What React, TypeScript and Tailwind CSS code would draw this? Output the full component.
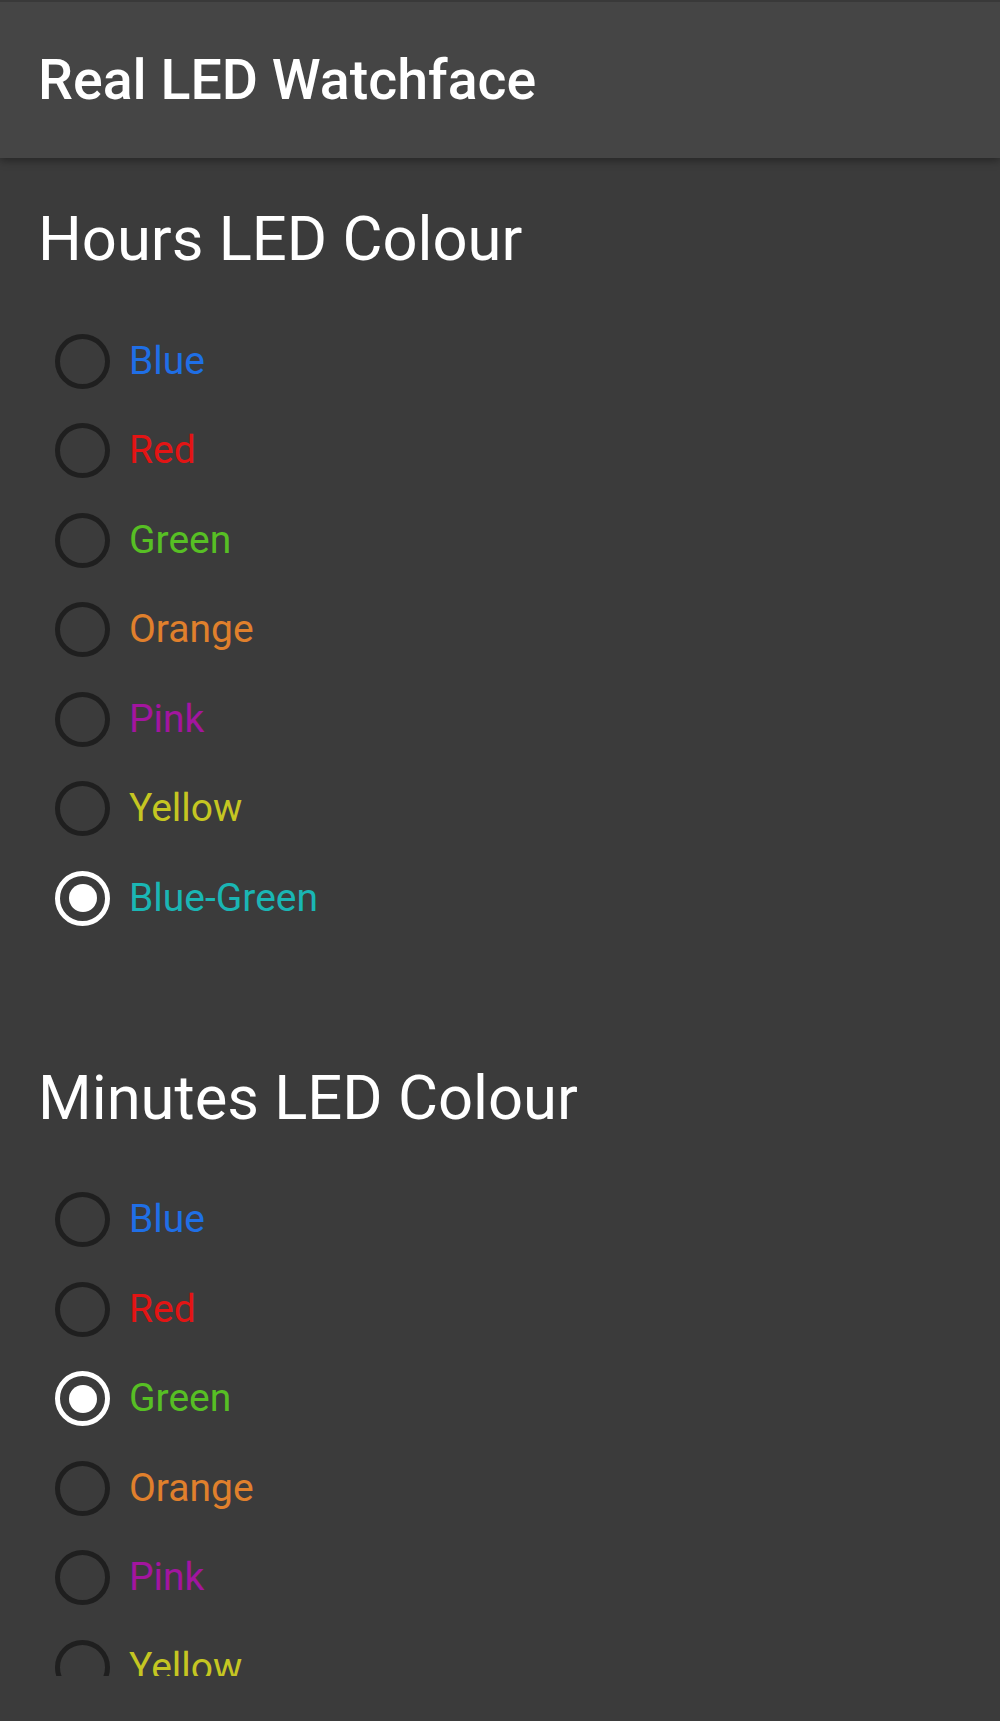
import React from "react";

type Opt = { label: string; color: string };

const OPTIONS: Opt[] = [
  { label: "Blue", color: "#1f6fe6" },
  { label: "Red", color: "#e31414" },
  { label: "Green", color: "#57bf24" },
  { label: "Orange", color: "#e0802c" },
  { label: "Pink", color: "#a3159f" },
  { label: "Yellow", color: "#c5c622" },
  { label: "Blue-Green", color: "#1ab6b4" },
];

function Radio({ checked }: { checked: boolean }) {
  if (checked) {
    return (
      <div className="w-[55px] h-[55px] rounded-full border-[5.5px] border-white flex items-center justify-center shrink-0">
        <div className="w-[28px] h-[28px] rounded-full bg-white" />
      </div>
    );
  }
  return <div className="w-[55px] h-[55px] rounded-full border-[5.5px] border-[#1f1f1f] shrink-0" />;
}

function Section({ title, selected }: { title: string; selected: string }) {
  return (
    <div className="flex flex-col">
      <h2 className="px-[38px] text-[61.5px] leading-[60px] font-normal text-white">{title}</h2>
      <div className="mt-[47.5px] flex flex-col">
        {OPTIONS.map((o) => (
          <div key={o.label} className="h-[89.5px] flex items-center pl-[55px]">
            <Radio checked={o.label === selected} />
            <span className="ml-[19px] text-[39px] leading-[39px]" style={{ color: o.color }}>
              {o.label}
            </span>
          </div>
        ))}
      </div>
    </div>
  );
}

export default function App() {
  return (
    <div
      className="w-[1000px] h-[1721px] bg-[#3b3b3b] flex flex-col overflow-hidden"
      style={{ fontFamily: "Roboto, 'Noto Sans', sans-serif" }}
    >
      <header className="relative z-10 h-[158px] shrink-0 bg-[#454545] border-t-2 border-[#393939] px-[38px] pt-[51px] shadow-[0_3px_8px_rgba(0,0,0,0.35)]">
        <h1 className="text-[55.5px] leading-[55px] font-medium text-white">Real LED Watchface</h1>
      </header>
      <main className="h-[1518px] shrink-0 overflow-hidden pt-[51px]">
        <Section title="Hours LED Colour" selected="Blue-Green" />
        <div className="h-[124.5px]" />
        <Section title="Minutes LED Colour" selected="Green" />
      </main>
    </div>
  );
}
